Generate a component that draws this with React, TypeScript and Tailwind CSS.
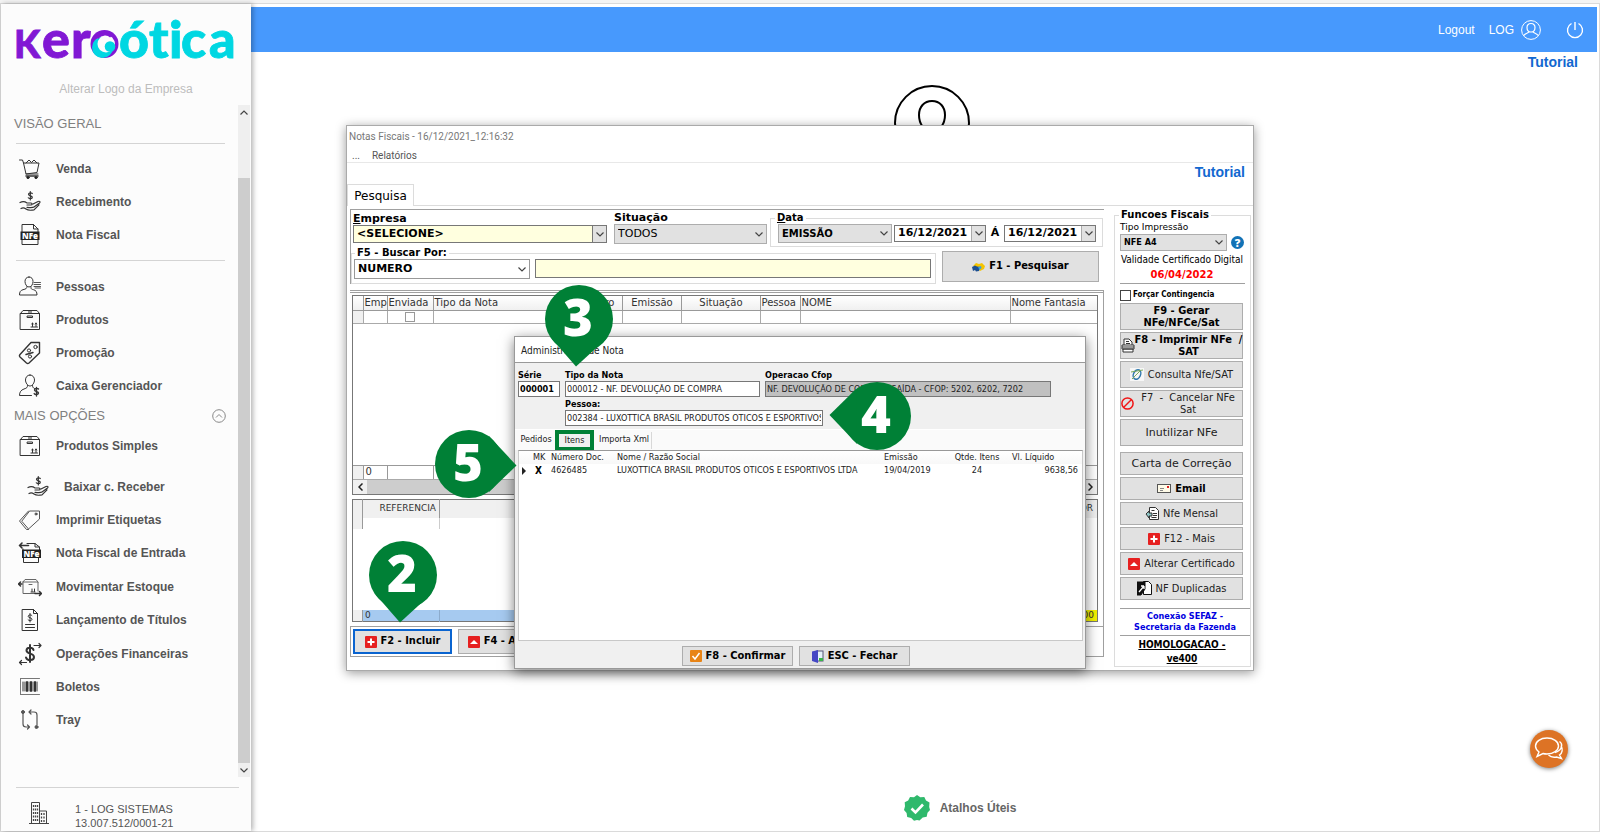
import type { ReactNode } from 'react';

const verdana = "font-['DejaVu_Sans',sans-serif]";
const tahoma = "font-['DejaVu_Sans_Condensed','DejaVu_Sans',sans-serif]";

function Icon({ children, size = 24 }: { children: ReactNode; size?: number }) {
  return (
    <svg
      width={size}
      height={size}
      viewBox="0 0 24 24"
      fill="none"
      stroke="#333"
      strokeWidth="1"
      strokeLinecap="round"
      strokeLinejoin="round"
      className="shrink-0"
      aria-hidden="true"
    >
      {children}
    </svg>
  );
}

const cartIcon = (
  <>
    <path d="M1.5 3h3l1 3 2.5 11h12M5.5 6H21l-2 9.500L8 17" />
    <path d="M8 6l3-3 2.500 2.500L16 3l3 3" />
    <path d="M8 19h12" strokeWidth="1.500" />
    <circle cx="10" cy="20.500" r="1.200" fill="#111" />
    <circle cx="18" cy="20.500" r="1.200" fill="#111" />
  </>
);

const handIcon = (
  <>
    <path d="M14.300 3.500c-.6-1-3.800-1-3.800.8 0 2 3.800 1 3.800 3 0 1.700-3.300 1.700-4 .5M12.300 1.500v8.500" strokeWidth="1.200" />
    <path d="M2 12.500c3-1.500 5-1 7 .5h4c1.500 0 1.500 2 0 2H9" strokeWidth="1.200" />
    <path d="M15 14l5-2.500c2-.8 2.500.6 1.500 1.500L16 17c-1 .8-5 .6-7 .4M3 18.500c2-1 3.500-.6 5 .5 2 1.500 5 1.500 8 .8l5-5" strokeWidth="1.200" />
  </>
);

const nfeIcon = (
  <>
    <path d="M4 9V1.500h11.500L20 6v3M15.500 1.500V6H20M4 16v5.500h16V16" />
    <rect x="2.500" y="8.500" width="19" height="8.500" fill="#222" stroke="none" />
    <text x="12" y="15.500" textAnchor="middle" fontSize="8" fontWeight="800" fontFamily="Open Sans, sans-serif" fill="#fff" stroke="none">NFe</text>
  </>
);

const personIcon = (
  <>
    <path d="M11 2c-2.800 0-4 2.200-4 4.500S8.500 12 11 12s4-3 4-5.500S13.800 2 11 2z" />
    <path d="M9 11.500c0 2-1 2.500-4 3.200-2.500.6-3.500 2.300-3.500 5.300h17.500c0-3-1-4.700-3.500-5.300-3-.7-2.500-1.200-2.500-3.200" />
    <path d="M16 7.500h6.500M16 9.500h6.500M16 11.500h6.500M17 13h5.500" stroke="#555" />
  </>
);

const boxIcon = (
  <>
    <path d="M2.500 5.500h19v16h-19zM2.500 5.500L5 2.500h14l2.500 3M11 2.500v3M13 2.500v3" />
    <rect x="9.500" y="8" width="5" height="1.500" />
    <path d="M14.500 15v3.500M18 15v3.500M13 19h6.500M13.800 16l.7-1 .7 1M17.300 16l.7-1 .7 1" />
  </>
);

const promoIcon = (
  <>
    <path d="M13 1.500h8.500V12L11 22c-1 .8-1.500.8-2.500 0L2 16c-.8-.8-.8-1.500 0-2.500z" strokeWidth="1.400" />
    <circle cx="17.500" cy="6" r="1.700" />
    <circle cx="11" cy="9.500" r="1.600" />
    <circle cx="12" cy="15.500" r="1.600" />
    <path d="M8 13.500l7-2" strokeWidth="1.400" />
  </>
);

const cashierIcon = (
  <>
    <path d="M12 1c-3 0-4.500 2.500-4.500 5S9.500 12 12 12s4.500-3.500 4.500-6S15 1 12 1z" />
    <path d="M9.500 11.500c0 2-.5 2.500-3.500 3.500s-4.500 3-4.500 6.500h12M14.500 11.500c0 1.500.3 2.200 2 3" />
    <path d="M20.500 15c-.8-1-4-.9-4 .9 0 2 4 1.200 4 3.200 0 1.900-3.500 1.900-4.300.5M18.500 13.500v8.500" strokeWidth="1.400" />
  </>
);

const tagIcon = (
  <>
    <path d="M12 3h9.500v8L10.500 21 4 13.500z" stroke="#555" />
    <path d="M10.500 3L1.500 13l7 8.500h2" stroke="#555" />
    <circle cx="18" cy="6" r="1" />
  </>
);

const nfeInIcon = (
  <>
    <path d="M9 2.500h8L21.500 6v3M17 2.500V6h4.500M5 8v2M5.500 16v5.500h15V16" />
    <path d="M1.500 4.500h9M4 2L1.500 4.500 4 7" strokeWidth="1.600" />
    <rect x="4" y="8.500" width="19" height="8.500" fill="#222" stroke="none" />
    <text x="13.500" y="15.500" textAnchor="middle" fontSize="8" fontWeight="800" fontFamily="Open Sans, sans-serif" fill="#fff" stroke="none">NFe</text>
  </>
);

const moveBoxIcon = (
  <>
    <path d="M5 7h15v9M5 7v11.500h12M5 7l2-2.500h11L20 7M11 9.500h3" stroke="#666" />
    <path d="M0 9h4M2.500 7L.5 9l2 2M17 18.500h6.500M21.500 16.500l2 2-2 2" strokeWidth="1.500" />
    <path d="M14 14v2.500M16.500 14v2.500M13 17h4" />
  </>
);

const titleIcon = (
  <>
    <path d="M4.500 1.500h11l4 4v17h-15zM15.500 1.500v4h4" />
    <path d="M14 7.500c-.6-1-3.800-1-3.800.8 0 2 3.800 1 3.800 3 0 1.700-3.300 1.700-4 .5M12 5.500v8.500M7.500 16.500h9M7.500 19.500h9" />
  </>
);

const financeIcon = (
  <>
    <path d="M15.500 8c-1-3-7-3-7 .6 0 4 7.500 2 7.500 6.400 0 4-7 3.900-8 .4M12 3v17" strokeWidth="2" />
    <path d="M16 3.500h7M21 1.500l2 2-2 2M1.500 20.500h7M3.500 18.500l-2 2 2 2" strokeWidth="1.200" />
  </>
);

const barcodeIcon = (
  <>
    <path d="M2.500 3.500h19M2.500 19.500h19M2.500 3.500v16" stroke="#777" />
    <path d="M5 7v9M7 7v9M11 7v9M15 7v9M19 7v9" strokeWidth="1" />
    <path d="M9 7v9M13 7v9M17 7v9" strokeWidth="2" />
  </>
);

const trayIcon = (
  <>
    <path d="M5 5v11c0 2 1 3 3 3h3M19 17V7c0-2-1-3-3-3h-5M13 2l-2 2 2 2M9.500 17l2 2-2 2" stroke="#555" strokeWidth="1.200" />
    <circle cx="5" cy="4" r="1.500" fill="#555" stroke="#555" />
    <circle cx="18.500" cy="19" r="1.500" fill="#555" stroke="#555" />
  </>
);

const overviewItems = [
  { label: 'Venda', icon: cartIcon },
  { label: 'Recebimento', icon: handIcon },
  { label: 'Nota Fiscal', icon: nfeIcon },
];

const registerItems = [
  { label: 'Pessoas', icon: personIcon },
  { label: 'Produtos', icon: boxIcon },
  { label: 'Promoção', icon: promoIcon },
  { label: 'Caixa Gerenciador', icon: cashierIcon },
];

const moreItems = [
  { label: 'Baixar c. Receber', icon: handIcon, indent: true },
  { label: 'Imprimir Etiquetas', icon: tagIcon },
  { label: 'Nota Fiscal de Entrada', icon: nfeInIcon },
  { label: 'Movimentar Estoque', icon: moveBoxIcon },
  { label: 'Lançamento de Títulos', icon: titleIcon },
  { label: 'Operações Financeiras', icon: financeIcon },
  { label: 'Boletos', icon: barcodeIcon },
  { label: 'Tray', icon: trayIcon },
];

function NavItem({ label, icon, indent }: { label: string; icon: ReactNode; indent?: boolean }) {
  return (
    <a href="#" className={`flex items-center gap-[14px] text-[12px] font-bold text-[#555] ${indent ? 'pl-[25px]' : 'pl-[17px]'}`}>
      <Icon>{icon}</Icon>
      {label}
    </a>
  );
}

function Logo() {
  return (
    <svg width="222" height="48" viewBox="14 15 222 48" className="overflow-visible" role="img" aria-label="keroótica" fontFamily="Lato, sans-serif" fontWeight="900">
      <g fill="#8118d4" stroke="#8118d4" strokeWidth=".8">
        <text x="13" y="57" fontSize="38">K</text>
        <text x="41" y="57" fontSize="52">e</text>
        <text x="70" y="57" fontSize="52">r</text>
      </g>
      <circle cx="103.500" cy="43" r="14" fill="#8118d4" />
      <circle cx="104" cy="43.500" r="10" fill="#fcfcfc" />
      <circle cx="101.500" cy="46.500" r="10.500" fill="#00d7e2" />
      <circle cx="105" cy="43" r="8.500" fill="#fcfcfc" />
      <path d="M96 37c5-5 11-4.500 14-1.500" fill="none" stroke="#8118d4" strokeWidth="2.500" />
      <circle cx="109" cy="45.500" r="5.300" fill="#00d7e2" />
      <g fill="#00d7e2" stroke="#00d7e2" strokeWidth=".8">
        <text x="118" y="57" fontSize="52">ó</text>
        <text x="148" y="57" fontSize="52">t</text>
        <text x="168" y="57" fontSize="52">i</text>
        <text x="180" y="57" fontSize="52">c</text>
        <text x="208" y="57" fontSize="52">a</text>
      </g>
    </svg>
  );
}

function Chevron({ up }: { up?: boolean }) {
  return (
    <svg width="8" height="5" viewBox="0 0 8 5" fill="none" stroke="#444" strokeWidth="1.200" aria-hidden="true">
      <path d={up ? 'M.5 4.500L4 1l3.500 3.500' : 'M.5.5L4 4 7.500.5'} />
    </svg>
  );
}

function Sidebar() {
  return (
    <aside className="relative z-10 flex w-[250px] shrink-0 flex-col bg-[#fcfcfc] shadow-[2px_0_5px_rgba(0,0,0,0.3)]">
      <div className="flex h-[101px] flex-col items-center pt-3">
        <Logo />
        <a href="#" className="mt-4 text-[12px] leading-[18px] text-[#bdbdbd]">Alterar Logo da Empresa</a>
      </div>
      <div className="flex flex-1">
        <nav className="flex-1">
          <h2 className="ml-[13px] flex h-[38px] items-center text-[13px] text-[#808080]">VISÃO GERAL</h2>
          <hr className="ml-[15px] mr-[13px] border-[#d4d4d4]" />
          <div className="mt-2 grid h-[100px] auto-rows-fr">
            {overviewItems.map((item) => (
              <NavItem key={item.label} {...item} />
            ))}
          </div>
          <hr className="ml-[15px] mr-[13px] mt-2 border-[#d4d4d4]" />
          <div className="mt-[9px] grid h-[133px] auto-rows-fr">
            {registerItems.map((item) => (
              <NavItem key={item.label} {...item} />
            ))}
          </div>
          <h2 className="ml-[13px] mr-3 flex h-[26px] items-center justify-between text-[13px] text-[#808080]">
            MAIS OPÇÕES
            <svg width="14" height="14" viewBox="0 0 14 14" fill="none" stroke="#888" aria-hidden="true">
              <circle cx="7" cy="7" r="6.300" />
              <path d="M4 8.500L7 5.500l3 3" />
            </svg>
          </h2>
          <div className="grid h-[33px]">
            <NavItem label="Produtos Simples" icon={boxIcon} />
          </div>
          <div className="mt-2 grid h-[267px] auto-rows-fr">
            {moreItems.map((item) => (
              <NavItem key={item.label} {...item} />
            ))}
          </div>
        </nav>
        <div className="mb-1 mr-px flex w-3 flex-col bg-[#efefef]">
          <button aria-label="Rolar para cima" className="flex h-[15px] items-center justify-center"><Chevron up /></button>
          <div className="flex flex-1 flex-col pt-[58px]">
            <div className="flex-1 bg-[#cdcdcd]" />
          </div>
          <button aria-label="Rolar para baixo" className="flex h-[14px] items-center justify-center"><Chevron /></button>
        </div>
      </div>
      <div className="flex h-[50px] flex-col pt-[6px]">
        <hr className="ml-[15px] mr-3 border-[#d4d4d4]" />
        <div className="flex gap-[26px] pl-7 pt-[14px]">
          <svg width="20" height="22" viewBox="0 0 20 22" fill="none" stroke="#444" aria-hidden="true">
            <path d="M0 21.500h20M2.500 21V.5h8V21M10.500 9h7v12" />
            <path d="M4.500 3v16M6.500 3v16M8.500 3v16M12.500 11v9M15 11v9" strokeDasharray="2 1.500" strokeWidth="1.300" />
          </svg>
          <div className="text-[11px] leading-[14px] text-[#555]">
            <p>1 - LOG SISTEMAS</p>
            <p>13.007.512/0001-21</p>
          </div>
        </div>
      </div>
    </aside>
  );
}

type SelectProps = { id: string; value: string; box: string; arrow?: string };

function Select({ id, value, box, arrow = 'w-[14px]' }: SelectProps) {
  return (
    <div className={`relative ${box}`}>
      <select id={id} aria-label={value} className="block h-full w-full appearance-none px-[3px] outline-none">
        <option>{value}</option>
      </select>
      <span className={`pointer-events-none absolute inset-y-0 right-0 flex items-center justify-center ${arrow}`}>
        <Chevron />
      </span>
    </div>
  );
}

function DateBox({ label }: { label: string }) {
  return (
    <div className="flex h-[17px] w-[92px] border border-[#777] bg-white">
      <input aria-label={label} defaultValue="16/12/2021" className="w-[76px] pl-[3px] text-[11px] font-bold outline-none" />
      <button aria-label="Abrir calendário" className="flex flex-1 items-center justify-center border-l border-[#aaa] bg-[#e1e1e1]"><Chevron /></button>
    </div>
  );
}

const plusIcon = (
  <svg width="12" height="12" viewBox="0 0 12 12" aria-hidden="true">
    <rect width="12" height="12" rx="1" fill="#e62020" />
    <path d="M6 2.500v7M2.500 6h7" stroke="#fff" strokeWidth="2" />
  </svg>
);

const upIcon = (
  <svg width="12" height="12" viewBox="0 0 12 12" aria-hidden="true">
    <rect width="12" height="12" rx="1" fill="#e62020" />
    <path d="M2 8l4-4 4 4z" fill="#fff" />
  </svg>
);

function Filters() {
  return (
    <div className="flex h-[75px] flex-col border-l border-t border-[#a0a0a0] pl-[2px]">
      <div className="flex h-[37px] text-[11px]">
        <div className="mr-[7px] w-[254px] pt-[2px]">
          <label htmlFor="empresa" className="block leading-[13px] font-bold"><u>E</u>mpresa</label>
          <Select id="empresa" value="<SELECIONE>" box="h-[18px] border border-[#777] bg-[#ffffdf] font-bold" arrow="w-[14px] border-l border-[#777] bg-[#e1e1e1]" />
        </div>
        <div className="mr-[3px] w-[153px] pt-[2px]">
          <label htmlFor="situacao" className="block leading-[12px] font-bold">Situação</label>
          <Select id="situacao" value="TODOS" box="h-5 border border-[#adadad] bg-[#e1e1e1]" />
        </div>
        <fieldset className="mr-px mt-[2px] h-[35px] min-w-0 flex-1 border border-[#dcdcdc] pl-[7px]">
          <legend className="-ml-[3px] px-[2px] text-[10px] leading-[12px] font-bold"><u>D</u>ata</legend>
          <div className="flex items-center gap-[2px]">
            <Select id="data" value="EMISSÃO" box="h-[19px] w-[114px] border border-[#adadad] bg-[#e1e1e1] text-[10px] font-bold" />
            <DateBox label="Data inicial" />
            <span className="w-[14px] text-center font-bold">Á</span>
            <DateBox label="Data final" />
          </div>
        </fieldset>
      </div>
      <div className="flex h-[37px]">
        <fieldset className="-ml-[2px] mr-[6px] h-[37px] w-[585px] border border-[#dcdcdc] pl-[2px]">
          <legend className="ml-px px-[2px] text-[10px] leading-[12px] font-bold">F5 - Buscar Por:</legend>
          <div className="flex gap-[5px]">
            <Select id="buscar" value="NUMERO" box="h-5 w-[176px] border border-[#999] bg-white text-[11px] font-bold" />
            <input aria-label="Buscar" className="h-[19px] w-[396px] border border-[#777] bg-[#ffffdf] outline-none" />
          </div>
        </fieldset>
        <button className={`mt-1 flex h-[31px] w-[157px] items-center justify-center gap-1 border border-[#adadad] bg-[#e1e1e1] text-[11px] font-bold ${tahoma}`}>
          <svg width="13" height="10" viewBox="0 0 13 10" aria-hidden="true">
            <path d="M1 4l3-3 3 1 3-1 3 3-1 3-4 2-3-3z" fill="#f5c400" />
            <path d="M0 5l3-1.500 2 1 3 .5-1 4-3 .5L3 8 1 9z" fill="#1c4f92" />
            <path d="M6 5l3-1 .500 2-2 2z" fill="#3aa0dc" />
          </svg>
          F1 - Pesquisar
        </button>
      </div>
    </div>
  );
}

const invoiceCols = [
  { title: '', width: 'w-[10px]' },
  { title: 'Emp', width: 'w-[24px]' },
  { title: 'Enviada', width: 'w-[46px]' },
  { title: 'Tipo da Nota', width: 'w-[130px]' },
  { title: 'Número', width: 'w-[59px]', align: 'text-right pr-[7px]' },
  { title: 'Emissão', width: 'w-[59px]', align: 'text-center' },
  { title: 'Situação', width: 'w-[79px]', align: 'text-center' },
  { title: 'Pessoa', width: 'w-[40px]' },
  { title: 'NOME', width: 'w-[210px]' },
  { title: 'Nome Fantasia' },
];

function InvoiceGrid() {
  return (
    <div className="border border-[#777] text-[10px] text-[#333]">
      <table className="h-[183px] w-full table-fixed border-collapse">
        <thead>
          <tr className="h-[14px] bg-gradient-to-b from-white to-[#f0f0f0]">
            {invoiceCols.map((col, i) => (
              <th key={i} className={`border-b border-r border-[#999] p-0 pl-px leading-[12px] font-normal whitespace-nowrap last:border-r-0 ${col.width ?? ''} ${col.align ?? 'text-left'}`}>
                {col.title}
              </th>
            ))}
          </tr>
        </thead>
        <tbody>
          <tr className="h-[13px]">
            {invoiceCols.map((col, i) => (
              <td key={i} className="border-b border-r border-[#aaa] p-0 first:bg-[#f0f0f0] last:border-r-0">
                {i === 2 && <input type="checkbox" aria-label="Enviada" className="mx-auto block h-[10px] w-[10px] appearance-none border border-[#999] bg-white" />}
              </td>
            ))}
          </tr>
          <tr>
            <td colSpan={invoiceCols.length} />
          </tr>
          <tr className="h-[14px]">
            {invoiceCols.map((col, i) => (
              <td key={i} className="border-r border-t border-[#999] p-0 pl-[2px] leading-[12px] first:bg-[#f0f0f0] last:border-r-0">{i === 1 ? '0' : ''}</td>
            ))}
          </tr>
        </tbody>
      </table>
      <div className="flex h-[15px] justify-between border-t border-[#aaa] bg-[#cdcdcd]">
        <button aria-label="Rolar para a esquerda" className="flex w-[14px] items-center justify-center bg-[#f0f0f0]">
          <svg width="5" height="8" viewBox="0 0 5 8" fill="none" stroke="#222" strokeWidth="1.500"><path d="M4.500.5L1 4l3.500 3.500" /></svg>
        </button>
        <button aria-label="Rolar para a direita" className="flex w-[14px] items-center justify-center bg-[#f0f0f0]">
          <svg width="5" height="8" viewBox="0 0 5 8" fill="none" stroke="#222" strokeWidth="1.500"><path d="M.5.5L4 4 .5 7.500" /></svg>
        </button>
      </div>
    </div>
  );
}

function ItemsGrid() {
  return (
    <table className="mt-1 h-[123px] w-full table-fixed border-collapse border border-[#777] text-[9px] text-[#333]">
      <thead>
        <tr className="h-[18px] bg-[#f0f0f0]">
          <th className="w-[10px] border-r border-[#999] p-0" />
          <th className="w-[77px] border-r border-[#999] p-0 pr-[3px] text-right font-normal">REFERENCIA</th>
          <th className="p-0" />
          <th className="w-[70px] p-0 pr-1 text-right font-normal">VALOR</th>
        </tr>
      </thead>
      <tbody>
        <tr className="h-[11px]">
          <td className="border-r border-[#999] bg-[#f0f0f0] p-0" />
          <td className="border-r border-[#ccc] p-0" />
          <td className="p-0" />
          <td className="p-0" />
        </tr>
        <tr>
          <td colSpan={4} />
        </tr>
        <tr className="h-[12px] bg-[#a6caf0]">
          <td className="border-r border-[#999] bg-[#f0f0f0] p-0" />
          <td className="border-r border-[#8cabcc] p-0 pl-[2px] leading-[11px]">0</td>
          <td className="p-0" />
          <td className="bg-[#f2f200] p-0 pr-[3px] text-right leading-[11px]">0,00</td>
        </tr>
      </tbody>
    </table>
  );
}

const printerIcon = (
  <svg width="14" height="15" viewBox="0 0 14 15" fill="#fff" stroke="#333" aria-hidden="true">
    <path d="M3 7V1h5l3 3v3M1 7h12v4H1zM2 11h10v3H2z" />
    <path d="M5 3.500h3M5 5.500h4M1 9h12" />
  </svg>
);

const consultIcon = (
  <svg width="14" height="13" viewBox="0 0 14 13" fill="none" aria-hidden="true">
    <rect width="14" height="13" fill="#f7f7f7" />
    <ellipse cx="7" cy="6.500" rx="3.500" ry="5" stroke="#2f78ad" strokeWidth="1.500" transform="rotate(25 7 6.500)" />
    <path d="M1 4l12-2M2 11l8-8" stroke="#7aa95c" />
  </svg>
);

const forbidIcon = (
  <svg width="13" height="13" viewBox="0 0 13 13" fill="none" stroke="#f01515" strokeWidth="1.500" aria-hidden="true">
    <circle cx="6.500" cy="6.500" r="5.600" />
    <path d="M2.500 10.500l8-8" />
  </svg>
);

const mailIcon = (
  <svg width="14" height="9" viewBox="0 0 14 9" fill="#fffbe8" stroke="#555" aria-hidden="true">
    <rect x=".5" y=".5" width="13" height="8" />
    <path d="M3 4.500h4M3 6.500h3" stroke="#888" />
    <rect x="10" y="2" width="2" height="2" fill="#d22" stroke="none" />
  </svg>
);

const monthlyIcon = (
  <svg width="14" height="13" viewBox="0 0 14 13" fill="#fff" stroke="#333" aria-hidden="true">
    <path d="M4.500.5h6l3 3v9h-9z" />
    <path d="M1 7l3-3v2h3v3H4v2z" fill="#8fc7c7" />
    <path d="M6.500 3.500h3M8 6.500h4M8 8.500h4M6.500 10.500h5" />
  </svg>
);

const duplicateIcon = (
  <svg width="15" height="15" viewBox="0 0 15 15" fill="#fff" stroke="#111" aria-hidden="true">
    <path d="M6.500.5h5l3 3v10h-8z" />
    <path d="M0 1h8v7l-4 6H0z" fill="#111" />
    <path d="M2 11l5-6M7 5H4M7 5v3" stroke="#fff" strokeWidth="1.300" />
  </svg>
);

type FiscalAction = { label: string; icon?: ReactNode; bold?: boolean; wide?: boolean };

const mainActions: FiscalAction[] = [
  { label: 'F9 - Gerar\nNFe/NFCe/Sat', bold: true },
  { label: 'F8 - Imprimir NFe  /\nSAT', icon: printerIcon, bold: true },
  { label: 'Consulta Nfe/SAT', icon: consultIcon },
  { label: 'F7  -  Cancelar NFe\nSat', icon: forbidIcon },
  { label: 'Inutilizar NFe', wide: true },
];

const extraActions: FiscalAction[] = [
  { label: 'Carta de Correção', wide: true },
  { label: 'Email', icon: mailIcon, bold: true },
  { label: 'Nfe Mensal', icon: monthlyIcon },
  { label: 'F12 - Mais', icon: plusIcon },
  { label: 'Alterar Certificado', icon: upIcon },
  { label: 'NF Duplicadas', icon: duplicateIcon },
];

function FiscalButton({ label, icon, bold, wide, height }: FiscalAction & { height: string }) {
  const twoLines = label.includes('\n');
  return (
    <button className={`flex w-[123px] items-center justify-center border border-[#adadad] bg-[#e1e1e1] text-[11px] leading-[12px] ${height} ${wide ? verdana : tahoma} ${bold ? 'font-bold' : 'text-[#222]'} ${twoLines ? '' : 'gap-1'}`}>
      {icon && <span className="shrink-0">{icon}</span>}
      <span className={twoLines ? 'flex-1 whitespace-pre' : 'whitespace-nowrap'}>{label}</span>
    </button>
  );
}

function FiscalPanel() {
  return (
    <fieldset className="h-[458px] w-[137px] min-w-0 border border-[#dcdcdc] pl-[5px]">
      <legend className="-ml-px px-[2px] text-[10px] leading-[12px] font-bold">Funcoes Fiscais</legend>
      <label htmlFor="impressao" className="block text-[9px] leading-[12px]">Tipo Impressão</label>
      <div className="mt-px flex items-center gap-1">
        <Select id="impressao" value="NFE A4" box={`h-[17px] w-[107px] border border-[#adadad] bg-[#e1e1e1] text-[9px] font-bold ${tahoma}`} />
        <svg width="13" height="13" viewBox="0 0 13 13" aria-hidden="true">
          <circle cx="6.500" cy="6.500" r="6.500" fill="#1272b6" />
          <text x="6.500" y="10.500" textAnchor="middle" fontSize="11" fontWeight="800" fontFamily="Open Sans, sans-serif" fill="#fff">?</text>
        </svg>
      </div>
      <p className={`mr-[6px] mt-px text-center text-[10px] leading-[15px] whitespace-nowrap ${tahoma}`}>Validade Certificado Digital</p>
      <p className="mr-[6px] text-center text-[10px] leading-[15px] font-bold text-[#f00]">06/04/2022</p>
      <hr className="mr-[5px] mt-px border-[#a0a0a0]" />
      <label className={`mt-[5px] flex h-3 items-center gap-[2px] text-[8px] font-bold ${tahoma}`}>
        <input type="checkbox" className="h-[11px] w-[11px] appearance-none border border-[#444] bg-white" />
        Forçar Contingencia
      </label>
      <div className="mt-[2px] flex flex-col gap-[2px]">
        {mainActions.map((action) => (
          <FiscalButton key={action.label} {...action} height="h-[27px]" />
        ))}
      </div>
      <div className="mt-[6px] flex flex-col gap-[2px]">
        {extraActions.map((action) => (
          <FiscalButton key={action.label} {...action} height="h-[23px]" />
        ))}
      </div>
      <div className={`mt-2 border-y border-[#a0a0a0] py-[2px] text-center text-[9px] leading-[11px] font-bold text-[#0000e0] ${tahoma}`}>
        Conexão SEFAZ -<br />Secretaria da Fazenda
      </div>
      <p className={`mt-[2px] pr-[6px] text-center text-[10px] leading-[14px] font-bold underline ${tahoma}`}>HOMOLOGACAO -<br />ve400</p>
    </fieldset>
  );
}

function NoteDialog() {
  return (
    <section className={`absolute left-[167px] top-[210px] flex h-[333px] w-[572px] flex-col border border-[#999] bg-[#f0f0f0] text-[9px] text-[#222] shadow-[0_3px_12px_rgba(0,0,0,0.5)] ${tahoma}`}>
      <h2 className="flex h-[26px] items-center border-b border-[#999] bg-white pl-[6px] pt-px text-[10px]">Administração de Nota</h2>
      <div className="flex h-[66px] gap-[5px] pl-[3px] pt-[6px] leading-[12px]">
        <div className="w-[42px]">
          <label htmlFor="serie" className="block font-bold text-black">Série</label>
          <input id="serie" defaultValue="000001" className="block h-4 w-full border border-[#777] bg-white pl-px font-bold text-black" />
        </div>
        <div className="w-[258px]">
          <div className="w-[195px]">
            <label htmlFor="tipo" className="block font-bold text-black">Tipo da Nota</label>
            <input id="tipo" defaultValue="000012 - NF. DEVOLUÇÃO DE COMPRA" className="block h-4 w-full border border-[#777] bg-white pl-px" />
          </div>
          <label htmlFor="pessoa" className="mt-px block font-bold text-black">Pessoa:</label>
          <input id="pessoa" defaultValue="002384 - LUXOTTICA BRASIL PRODUTOS OTICOS E ESPORTIVOS LTDA" className="block h-4 w-full border border-[#777] bg-white px-px" />
        </div>
        <div className="-ml-[63px] w-[286px]">
          <label htmlFor="cfop" className="block font-bold text-black">Operacao Cfop</label>
          <input id="cfop" readOnly defaultValue="NF. DEVOLUÇÃO DE COMPRA - SAÍDA - CFOP: 5202, 6202, 7202" className="block h-4 w-full border border-[#777] bg-[#c0c0c0] pl-px" />
        </div>
      </div>
      <div className="flex h-[21px] items-center gap-[3px] border-t border-white bg-[#fafafa] pl-[5px]">
        <button className="h-[17px] w-[32px]">Pedidos</button>
        <button className="h-[21px] w-[39px] border-4 border-[#008036] bg-[#f0f0f0]">Itens</button>
        <button className="h-[17px] border-r border-[#d8d8d8] px-[2px]">Importa Xml</button>
      </div>
      <div className="ml-[3px] mr-[2px] flex-1 border border-[#c8c8c8] border-t-[#999] bg-white">
        <table className="w-full table-fixed border-collapse text-left leading-[13px] whitespace-nowrap">
          <thead>
            <tr className="bg-gradient-to-b from-white to-[#f8f8f8]">
              <th className="w-[12px] p-0" />
              <th className="w-[20px] p-0 pl-[2px] font-normal">MK</th>
              <th className="w-[66px] p-0 font-normal">Número Doc.</th>
              <th className="w-[267px] p-0 font-normal">Nome / Razão Social</th>
              <th className="w-[63px] p-0 font-normal">Emissão</th>
              <th className="w-[60px] p-0 text-center font-normal">Qtde. Itens</th>
              <th className="p-0 pl-[5px] font-normal">Vl. Líquido</th>
            </tr>
          </thead>
          <tbody>
            <tr>
              <td className="p-0">
                <svg width="10" height="8" viewBox="0 0 10 8" aria-hidden="true"><path d="M3 0l4 4-4 4z" fill="#222" /></svg>
              </td>
              <td className="p-0 pl-1 text-[10px] font-bold text-black">X</td>
              <td className="p-0">4626485</td>
              <td className="p-0">LUXOTTICA BRASIL PRODUTOS OTICOS E ESPORTIVOS LTDA</td>
              <td className="p-0">19/04/2019</td>
              <td className="p-0 text-center">24</td>
              <td className="p-0 pr-1 text-right">9638,56</td>
            </tr>
          </tbody>
        </table>
      </div>
      <div className="flex h-[27px] justify-center gap-[6px] pr-[8px] pt-[5px] text-[11px] font-bold text-black">
        <button className="flex h-5 w-[111px] items-center justify-center gap-1 border border-[#adadad] bg-[#e1e1e1]">
          <svg width="12" height="12" viewBox="0 0 12 12" aria-hidden="true">
            <rect width="12" height="12" rx="1" fill="#e88416" />
            <path d="M2.500 6l2.500 3 4.500-6" fill="none" stroke="#fff" strokeWidth="1.500" />
          </svg>
          F8 - Confirmar
        </button>
        <button className="flex h-5 w-[111px] items-center justify-center gap-1 border border-[#adadad] bg-[#e1e1e1]">
          <svg width="12" height="13" viewBox="0 0 12 13" aria-hidden="true">
            <rect x="5" y="1" width="6" height="10" fill="#e6f3fa" stroke="#557" />
            <path d="M7 8h4v3H7z" fill="#39b54a" />
            <path d="M0 1.500L6 0v13l-6-2z" fill="#4548c4" />
          </svg>
          ESC - Fechar
        </button>
      </div>
    </section>
  );
}

type PinProps = { digit: string; place: string; tip: 'down' | 'right' | 'left' };

const pinShapes = {
  down: { box: '0 0 68 82', w: 68, h: 82, path: 'M7 54L31 81.500 61 54z', cx: 34, cy: 34 },
  right: { box: '0 0 82 68', w: 82, h: 68, path: 'M54 6L81.500 35.500 54 62z', cx: 34, cy: 34 },
  left: { box: '0 0 82 68', w: 82, h: 68, path: 'M27 7L.5 33 28 62z', cx: 48, cy: 34 },
};

function Pin({ digit, place, tip }: PinProps) {
  const shape = pinShapes[tip];
  return (
    <svg width={shape.w} height={shape.h} viewBox={shape.box} className={`absolute ${place}`} fill="#008036">
      <circle cx={shape.cx} cy={shape.cy} r="34" />
      <path d={shape.path} />
      <text x={shape.cx - 1} y="51" textAnchor="middle" fontSize="51" fontWeight="800" fontFamily="Open Sans, sans-serif" fill="#fff">{digit}</text>
    </svg>
  );
}

function InvoiceWindow() {
  return (
    <section className={`absolute left-[95px] top-[54px] h-[546px] w-[908px] border border-[#aaa] bg-white shadow-[0_2px_10px_rgba(0,0,0,0.4)] ${verdana}`}>
      <h1 className="flex h-5 items-center pl-[2px] font-['Roboto',sans-serif] text-[10px] text-[#777]">Notas Fiscais - 16/12/2021_12:16:32</h1>
      <div className="flex h-[17px] items-center gap-3 border-b border-[#e8e8e8] pl-[5px] pt-[2px] font-['Roboto',sans-serif] text-[10px] text-[#555]">
        <button>...</button>
        <button>Relatórios</button>
      </div>
      <div className="flex h-[43px] justify-between border-b border-[#dcdcdc]">
        <button className="-mb-px mt-auto h-[22px] w-[67px] border border-b-0 border-[#dcdcdc] bg-white text-[12px]">Pesquisa</button>
        <a href="#" className="mr-2 font-['Liberation_Sans',sans-serif] text-[14px] leading-[18px] font-bold text-[#1268d0]">Tutorial</a>
      </div>
      <div className="flex gap-[10px] pl-[3px]">
        <div className="w-[754px] pt-[3px]">
          <Filters />
          <div className="mt-[6px] border-r border-t-[3px] border-double border-[#a0a0a0] pb-[4px] pl-[2px] pr-[5px] pt-[2px]">
            <InvoiceGrid />
            <ItemsGrid />
          </div>
          <div className={`flex gap-[6px] border border-[#a0a0a0] p-[2px] text-[11px] font-bold ${tahoma}`}>
            <button className="flex h-[25px] w-[99px] items-center justify-center gap-1 border-2 border-[#0a64d0] bg-[#e1e1e1]">{plusIcon}F2 - Incluir</button>
            <button className="flex h-[25px] w-[99px] items-center justify-center gap-1 border border-[#adadad] bg-[#e1e1e1]">{upIcon}F4 - Alterar</button>
          </div>
        </div>
        <div className="pt-[3px]">
          <FiscalPanel />
        </div>
      </div>
      <NoteDialog />
      <Pin digit="3" tip="down" place="left-[198px] top-[159px]" />
      <Pin digit="5" tip="right" place="left-[88px] top-[304px]" />
      <Pin digit="2" tip="down" place="left-[22px] top-[415px]" />
      <Pin digit="4" tip="left" place="left-[482px] top-[256px]" />
    </section>
  );
}

export default function App() {
  return (
    <div className="flex min-h-screen flex-col bg-[#f4f4f4] pt-[3px] font-['Liberation_Sans',Arial,sans-serif]">
      <div className="flex flex-1 border border-[#dadada] bg-white">
        <Sidebar />
        <main className="flex min-w-0 flex-1 flex-col">
          <header className="mr-[2px] mt-[3px] flex h-[45px] items-center justify-end bg-[#4799fd] pr-[13px] text-[12px] text-white">
            <a href="#" className="mr-[14px]">Logout</a>
            <span className="mr-[7px]">LOG</span>
            <svg width="20" height="20" viewBox="0 0 20 20" fill="none" stroke="#fff" className="mr-[25px]" aria-hidden="true">
              <circle cx="10" cy="10" r="9.400" />
              <path d="M10 3.500c-3 0-4 2-4 4 0 2.500 1.500 4.500 4 4.500s4-2 4-4.500c0-2-1-4-4-4zM8 11.500c0 2-4 1.500-5 4M12 11.500c0 2 4 1.500 5 4" strokeWidth="1.200" />
            </svg>
            <button aria-label="Sair">
              <svg width="18" height="18" viewBox="0 0 18 18" fill="none" stroke="#fff" strokeWidth="1.400" aria-hidden="true">
                <path d="M9 1v8M5.500 2.500a7.500 7.500 0 1 0 7 0" />
              </svg>
            </button>
          </header>
          <a href="#" className="mr-[21px] mt-px self-end text-[14px] leading-[18px] font-bold text-[#1268d0]">Tutorial</a>
          <div className="relative flex flex-1 flex-col items-center">
            <svg width="76" height="76" viewBox="0 0 76 76" fill="none" stroke="#000" strokeWidth="2" className="ml-[14px] mt-[14px]" aria-hidden="true">
              <circle cx="38" cy="38" r="37" />
              <path d="M38 16c-8 0-13 6-13 14 0 9 5 16 13 16s13-7 13-16c0-8-5-14-13-14z" />
            </svg>
            <InvoiceWindow />
            <button aria-label="Chat" className="absolute bottom-[63px] right-[31px] flex h-[38px] w-[38px] items-center justify-center rounded-full bg-[#dd7325] shadow-[0_1px_4px_rgba(0,0,0,0.5)]">
              <svg width="30" height="26" viewBox="0 0 30 26" fill="none" stroke="#fff" strokeWidth="1.400" aria-hidden="true">
                <path d="M21 16.500c3.500-1 6-3 6.500-6 .5-2-.5-4-2-5M27 10c2 3 1.500 7-1.500 9l2 3.500-5-1.500c-3 .6-6 0-8-2" />
                <path d="M13 2C6.500 2 1.500 5.500 1.500 10c0 2.500 1.500 4.500 3.500 6l-2 4.500 6-3c1 .3 2.500.5 4 .5 6.500 0 11.500-3.500 11.500-8S19.500 2 13 2z" fill="#dd7325" />
              </svg>
            </button>
            <a href="#" className="mb-[10px] ml-[70px] mt-auto flex items-center gap-[10px] text-[12px] font-bold text-[#666]">
              <svg width="26" height="26" viewBox="0 0 26 26" aria-hidden="true">
                <path d="M13 0l3.300 2.200 4-.2 1.700 3.600 3.500 2L25.200 12l.8 3-2.500 2.800-.8 4-4 .8L15.500 25.500 13 25l-3 .7-2.800-2.800-4-.9-.6-4L0 15l1-3.800-.3-4L4.200 5.500 6 2l4 .2z" fill="#2fb96c" />
                <path d="M7.500 13.500l4 4 7.500-8" fill="none" stroke="#fff" strokeWidth="2.600" />
              </svg>
              Atalhos Úteis
            </a>
          </div>
        </main>
      </div>
    </div>
  );
}
